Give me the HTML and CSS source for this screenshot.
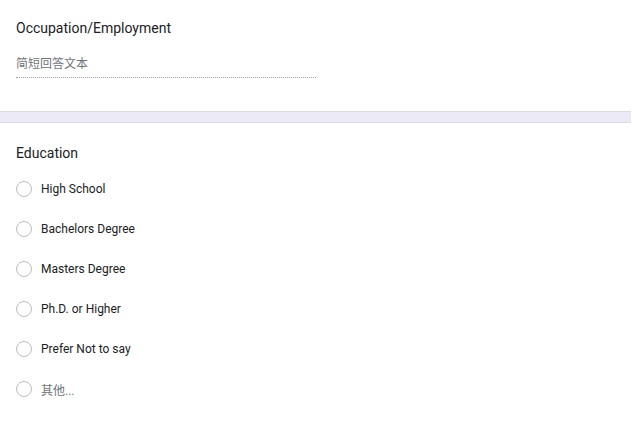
FILE: index.html
```html
<!DOCTYPE html>
<html>
<head>
<meta charset="utf-8">
<link rel="stylesheet" href="styles.css">
</head>
<body>
<section class="card card-top">
  <div class="q-title">Occupation/Employment</div>
  <div class="short-answer">简短回答文本</div>
</section>
<div class="band"></div>
<section class="card card-bottom">
  <div class="q-title">Education</div>
  <ul class="options">
    <li class="opt"><span class="radio"></span><span>High School</span></li>
    <li class="opt"><span class="radio"></span><span>Bachelors Degree</span></li>
    <li class="opt"><span class="radio"></span><span>Masters Degree</span></li>
    <li class="opt"><span class="radio"></span><span>Ph.D. or Higher</span></li>
    <li class="opt"><span class="radio"></span><span>Prefer Not to say</span></li>
    <li class="opt other"><span class="radio"></span><span>其他...</span></li>
  </ul>
</section>
</body>
</html>
```
FILE: styles.css
```css
html, body {
  margin: 0;
  padding: 0;
  background: #fff;
  font-family: Roboto, "Noto Sans CJK SC", sans-serif;
  color: #202124;
}
.card {
  background: #fff;
  box-sizing: border-box;
  width: 632px;
}
.card-top {
  height: 111px;
  padding: 18px 16px 0;
}
.band {
  width: 631px;
  height: 10px;
  background: #edeaf7;
  border-top: 1px solid #dadce0;
  border-bottom: 1px solid #dadce0;
}
.card-bottom {
  padding-top: 20px;
  padding-left: 16px;
  height: 301px;
}
.q-title {
  font-family: Roboto, sans-serif;
  font-size: 14px;
  line-height: 20px;
  color: #202124;
  letter-spacing: 0;
}
.short-answer {
  margin-top: 16px;
  width: 300px;
  font-size: 12px;
  line-height: 20px;
  color: #70757a;
  padding-bottom: 3px;
  border-bottom: 1px dotted #9aa0a6;
}
.options {
  list-style: none;
  margin: 16px 0 0;
  padding: 0;
  display: flex;
  flex-direction: column;
  gap: 20px;
}
.opt {
  display: flex;
  align-items: center;
  gap: 9px;
  height: 20px;
  font-size: 12px;
  color: #202124;
}
.opt.other {
  color: #70757a;
}
.radio {
  width: 16px;
  height: 16px;
  border: 1px solid #bdbdbd;
  border-radius: 50%;
  box-sizing: border-box;
  flex: none;
}
```
